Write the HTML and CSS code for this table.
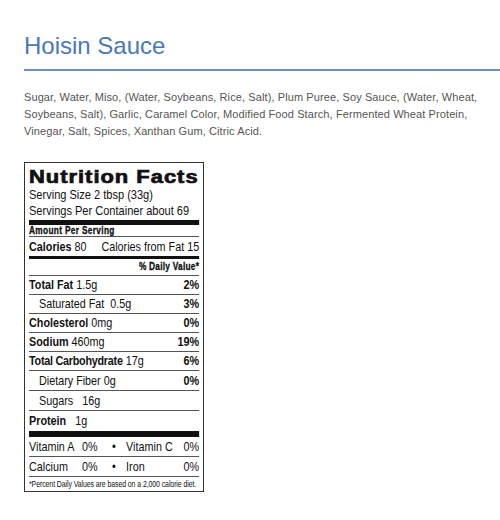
FILE: index.html
```html
<!DOCTYPE html>
<html>
<head>
<meta charset="utf-8">
<link rel="stylesheet" href="styles.css">
</head>
<body>
<div class="page">
  <h1 class="title">Hoisin Sauce</h1>
  <p class="ingredients">Sugar, Water, Miso, (Water, Soybeans, Rice, Salt), Plum Puree, Soy Sauce, (Water, Wheat, Soybeans, Salt), Garlic, Caramel Color, Modified Food Starch, Fermented Wheat Protein, Vinegar, Salt, Spices, Xanthan Gum, Citric Acid.</p>
  <div class="label">
    <div class="nf-title">Nutrition Facts</div>
    <div class="nf-body">
      <div class="nf-serv">Serving Size 2 tbsp (33g)</div>
      <div class="nf-serv">Servings Per Container about 69</div>
      <div class="bar-thick"></div>
      <div class="nf-amount">Amount Per Serving</div>
      <div class="row cal"><span><b>Calories</b> 80</span><span class="calfat">Calories from Fat 15</span></div>
      <div class="bar-mid"></div>
      <div class="nf-dv">% Daily Value*</div>
      <div class="row"><span><b>Total Fat</b> 1.5g</span><b>2%</b></div>
      <div class="row sub"><span>Saturated Fat&nbsp; 0.5g</span><b>3%</b></div>
      <div class="row"><span><b>Cholesterol</b> 0mg</span><b>0%</b></div>
      <div class="row"><span><b>Sodium</b> 460mg</span><b>19%</b></div>
      <div class="row"><span><b class="narrow">Total Carbohydrate</b> 17g</span><b>6%</b></div>
      <div class="row sub tall"><span>Dietary Fiber 0g</span><b>0%</b></div>
      <div class="row sub tall"><span>Sugars&nbsp;&nbsp; 16g</span></div>
      <div class="row tall last"><span><b>Protein</b>&nbsp;&nbsp; 1g</span></div>
      <div class="bar-low"></div>
      <div class="vit"><span>Vitamin A</span><span>0%</span><span class="dot">•</span><span>Vitamin C</span><span>0%</span></div>
      <div class="vit"><span>Calcium</span><span>0%</span><span class="dot">•</span><span>Iron</span><span>0%</span></div>
      <div class="nf-foot">*Percent Daily Values are based on a 2,000 calorie diet.</div>
    </div>
  </div>
</div>
</body>
</html>
```
FILE: styles.css
```css
html, body { margin: 0; padding: 0; background: #fff; }
.page { padding: 32px 0 0 24px; font-family: "Liberation Sans", Arial, sans-serif; }
.title {
  margin: 0;
  font-size: 24px;
  font-weight: normal;
  color: #4a78b5;
  line-height: 28px;
  padding-bottom: 9px;
  border-bottom: 2px solid #6690c6;
}
.ingredients {
  margin: 18px 0 0 0;
  width: 470px;
  font-size: 11px;
  letter-spacing: 0.1px;
  line-height: 17px;
  color: #555;
}
.label {
  margin-top: 22px;
  width: 170px;
  border: 1px solid #333;
  padding: 4px 4px 0 4px;
  color: #111;
  font-family: "Liberation Sans", Arial, sans-serif;
}
.nf-title {
  font-weight: bold;
  font-size: 18px;
  line-height: 20px;
  letter-spacing: 0.8px;
  -webkit-text-stroke: 0.7px #111;
  transform: scaleX(1.22);
  transform-origin: left top;
  white-space: nowrap;
}
.nf-body {
  width: 205px;
  transform: scaleX(0.83);
  transform-origin: left top;
}
.nf-serv { font-size: 13.3px; line-height: 16px; white-space: nowrap; }
.bar-thick { height: 5px; background: #111; margin: 1px 0 1px; }
.bar-mid { height: 3px; background: #111; }
.bar-low { height: 6px; background: #111; margin-top: 1px; }
.nf-amount {
  font-weight: bold;
  font-size: 10px;
  line-height: 10px;
  letter-spacing: 0.4px;
  -webkit-text-stroke: 0.3px #111;
  border-bottom: 1px solid #555;
}
.row {
  display: flex;
  justify-content: space-between;
  font-size: 13px;
  line-height: 18px;
  border-bottom: 1px solid #555;
  white-space: nowrap;
}
.row.tall { line-height: 19px; }
.row.last { border-bottom: none; }
.row b { font-weight: bold; }
.row b.narrow { letter-spacing: -0.3px; }
.cal { line-height: 19px; border-bottom: none; }
.sub { padding-left: 12px; }
.nf-dv {
  text-align: right;
  font-weight: bold;
  font-size: 10px;
  line-height: 16px;
  letter-spacing: 0.3px;
  -webkit-text-stroke: 0.3px #111;
  border-bottom: 1px solid #555;
}
.vit {
  display: grid;
  grid-template-columns: 64px 36px 17px 1fr auto;
  font-size: 13px;
  line-height: 19px;
  border-bottom: 1px solid #555;
  white-space: nowrap;
}
.dot { padding-left: 0; }
.nf-foot {
  font-size: 8.4px;
  line-height: 14px;
  white-space: nowrap;
  letter-spacing: -0.1px;
}
```
